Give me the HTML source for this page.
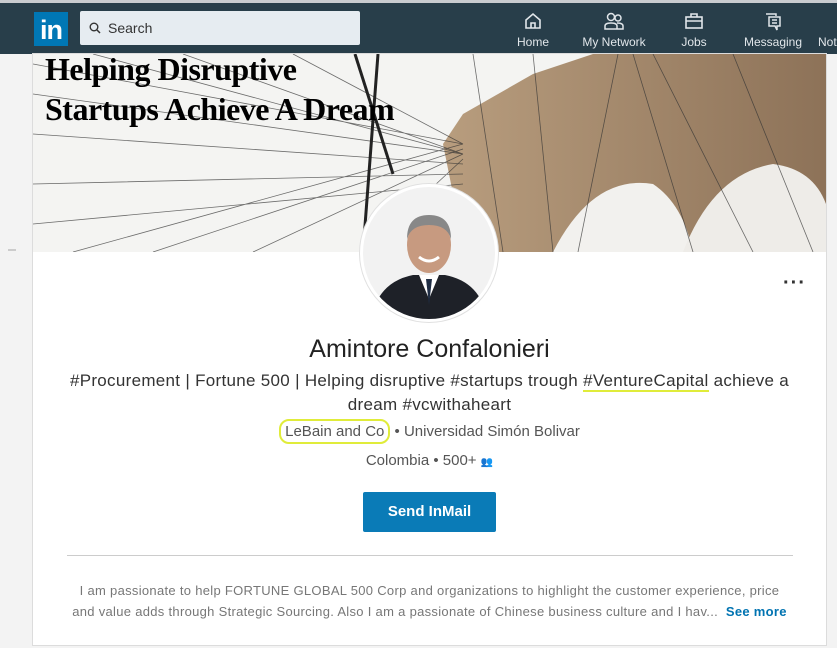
<!DOCTYPE html>
<html><head><meta charset="utf-8"><style>
*{margin:0;padding:0;box-sizing:border-box}
body{width:837px;height:648px;background:#f3f3f3;font-family:"Liberation Sans",sans-serif;position:relative;overflow:hidden}
.nav{position:absolute;left:0;top:0;width:837px;height:54px;background:#283e4a;border-top:3px solid #c9ccd0}
.logo{position:absolute;left:34px;top:9px;width:34px;height:34px;background:#0077b5;color:#fff;font-weight:bold;font-size:27px;line-height:36px;text-align:center;letter-spacing:-1px}
.search{position:absolute;left:80px;top:8px;width:280px;height:34px;background:#e6ecf1;border-radius:2px;color:#333;font-size:14px;line-height:34px;padding-left:28px}
.ni{position:absolute;top:8px;color:#e1e6ea;font-size:12px;text-align:center}
.ni svg{display:block;margin:0 auto 4px}
.card{position:absolute;left:33px;top:54px;width:793px;height:591px;background:#fff;box-shadow:0 0 0 1px #dcdcdc}
.banner{position:absolute;left:0;top:0;width:793px;height:198px;overflow:hidden;background:#f4f4f2}
.btxt{position:absolute;left:12px;top:-5px;font-family:"Liberation Serif",serif;font-weight:bold;font-size:32px;line-height:40px;color:#000;letter-spacing:-0.5px}
.av{position:absolute;left:327px;top:130px;width:138px;height:138px;border-radius:50%;background:#fff;border:3px solid #fff;box-shadow:0 0 0 1px #e0e0e0;overflow:hidden}
.c{position:absolute;left:0;width:793px;text-align:center;color:#333;white-space:nowrap}
</style></head><body>
<div class="nav">
<div class="logo">in</div>
<div class="search"><svg style="position:absolute;left:9px;top:11px" width="12" height="12" viewBox="0 0 12 12"><circle cx="5" cy="5" r="3.8" fill="none" stroke="#333" stroke-width="1.4"/><path d="M8 8l3 3" stroke="#333" stroke-width="1.5"/></svg>Search</div>
<div class="ni" style="left:515px;width:36px"><svg width="20" height="20" viewBox="0 0 20 20"><path d="M3 9L10 3l7 6v8H3z M8 17v-5h4v5" fill="none" stroke="#e1e6ea" stroke-width="1.6"/></svg>Home</div>
<div class="ni" style="left:578px;width:72px"><svg width="22" height="20" viewBox="0 0 22 20"><circle cx="8" cy="6" r="3.5" fill="none" stroke="#e1e6ea" stroke-width="1.5"/><circle cx="15" cy="7" r="3" fill="none" stroke="#e1e6ea" stroke-width="1.5"/><path d="M2 18v-3q0-3 6-3t6 3v3z M14 12q6 0 6 3v3h-6" fill="none" stroke="#e1e6ea" stroke-width="1.5"/></svg>My Network</div>
<div class="ni" style="left:678px;width:32px"><svg width="20" height="20" viewBox="0 0 20 20"><rect x="2" y="6" width="16" height="11" fill="none" stroke="#e1e6ea" stroke-width="1.6"/><path d="M7 6V3h6v3M2 10h16" fill="none" stroke="#e1e6ea" stroke-width="1.6"/></svg>Jobs</div>
<div class="ni" style="left:743px;width:60px"><svg width="20" height="20" viewBox="0 0 20 20"><path d="M3 3h10v2M6 6h11v9h-3v4l-2-4H6z M9 9h5M9 12h5" fill="none" stroke="#e1e6ea" stroke-width="1.5"/></svg>Messaging</div>
<div class="ni" style="left:818px;width:30px;text-align:left"><div style="height:24px"></div>Not</div>
</div>
<div style="position:absolute;left:8px;top:249px;width:8px;height:2px;background:#ccc"></div>
<div class="card">
<div class="banner">
<svg width="793" height="198" viewBox="0 0 793 198" style="position:absolute;left:0;top:0">
<defs><linearGradient id="g" x1="0" x2="1" y1="0" y2="0"><stop offset="0" stop-color="#b89d7e"/><stop offset="1" stop-color="#8d7258"/></linearGradient></defs>
<polygon points="430,60 500,20 560,0 793,0 793,198 455,198 420,140 410,90" fill="url(#g)"/>
<path d="M520,198 Q560,120 620,130 Q650,150 660,198Z" fill="#f2f1ee"/>
<path d="M650,198 Q680,120 740,110 Q780,115 793,150 L793,198Z" fill="#eeece8"/>
<g stroke="#333" stroke-width="0.8" opacity="0.7">
<path d="M0,40 L430,100 M0,80 L430,110 M0,130 L430,120 M0,170 L430,130 M40,198 L430,90 M120,198 L430,95 M220,198 L430,100 M330,198 L430,105 M0,10 L430,90 M60,0 L430,100 M150,0 L430,100 M260,0 L430,90"/>
<path d="M440,0 L470,198 M500,0 L520,198 M585,0 L545,198 M600,0 L660,198 M700,0 L780,198 M620,0 L720,198"/>
</g>
<path d="M322,0 L360,120" stroke="#222" stroke-width="3"/>
<path d="M345,0 L330,198" stroke="#222" stroke-width="3"/>
</svg>
<div class="btxt">Helping Disruptive<br>Startups Achieve A Dream</div>
</div>
<div class="av"><svg width="132" height="132" viewBox="0 0 132 132"><rect width="132" height="132" fill="#f2f2f2"/><path d="M8,132 Q15,95 50,88 L82,88 Q118,95 124,132Z" fill="#1e2128"/><path d="M56,88 L66,112 L76,88Z" fill="#fff"/><path d="M63,92 L66,118 L69,92Z" fill="#1f2d44"/><ellipse cx="66" cy="58" rx="22" ry="28" fill="#c79a80"/><path d="M44,52 Q44,28 66,28 Q88,28 88,52 Q84,38 66,38 Q48,38 44,52Z" fill="#888"/><path d="M56,70 Q66,78 76,70" stroke="#fff" stroke-width="3" fill="none"/></svg></div>
<div style="position:absolute;right:20px;top:218px;font-size:20px;color:#333;letter-spacing:1px;font-weight:bold">···</div>
<div class="c" style="top:281px;font-size:25px;color:#222">Amintore Confalonieri</div>
<div class="c" style="top:315px;font-size:17px;line-height:24px;letter-spacing:0.3px">#Procurement | Fortune 500 | Helping disruptive #startups trough <span style="border-bottom:2px solid #e0ec3a">#VentureCapital</span> achieve a<br>dream #vcwithaheart</div>
<div class="c" style="top:369px;font-size:15px;color:#555"><span style="border:2px solid #e0ec3a;border-radius:10px;padding:2px 4px">LeBain and Co</span> • Universidad Simón Bolivar</div>
<div class="c" style="top:398px;font-size:15px;color:#555">Colombia • 500+ <span style="font-size:10px">👥</span></div>
<div style="position:absolute;left:330px;top:438px;width:133px;height:40px;background:#0a7bb7;border-radius:2px;color:#fff;font-weight:bold;font-size:15px;line-height:40px;text-align:center">Send InMail</div>
<div style="position:absolute;left:34px;top:501px;width:726px;height:1px;background:#ccc"></div>
<div class="c" style="top:526px;font-size:13px;line-height:21px;color:#777;letter-spacing:0.3px">I am passionate to help FORTUNE GLOBAL 500 Corp and organizations to highlight the customer experience, price<br>and value adds through Strategic Sourcing. Also I am a passionate of Chinese business culture and I hav... &nbsp;<span style="color:#0073b1;font-weight:bold">See more</span></div>
</div>
</body></html>
